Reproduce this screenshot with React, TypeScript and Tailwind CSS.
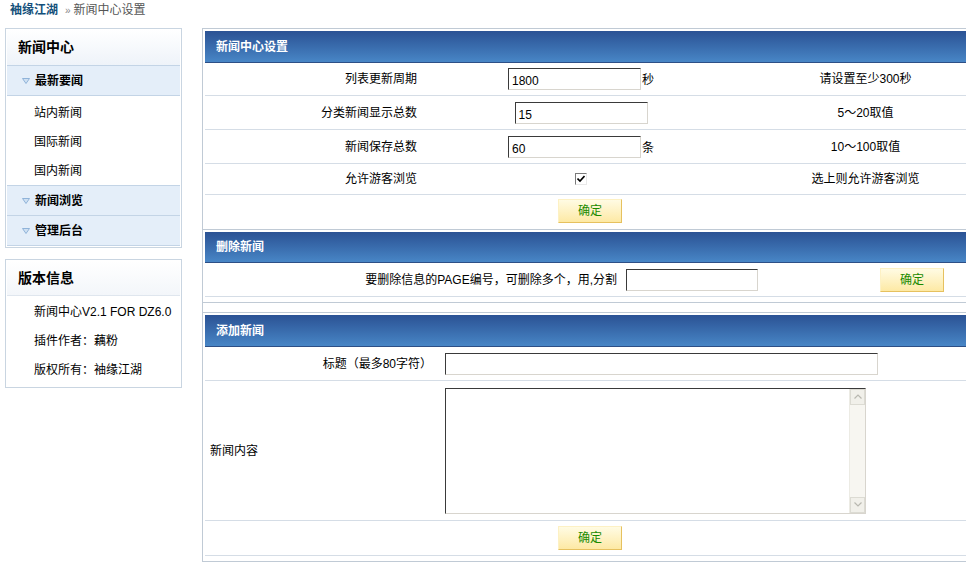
import React from 'react';

const font = { fontFamily: '"Liberation Sans", "Noto Sans CJK SC", sans-serif' };

// small blue triangle used in the side menu
function Tri() {
  return (
    <svg width="8" height="6" viewBox="0 0 8 6" className="mr-[5px]">
      <path d="M0.5 0.5 L7.5 0.5 L4 5.5 Z" fill="#cfe0f2" stroke="#8fb3d9" strokeWidth="1" />
    </svg>
  );
}

function OkButton() {
  return (
    <button className="w-[64px] h-[24px] bg-gradient-to-b from-[#fffbe3] to-[#fde9a4] border border-[#fdf1c4] border-r-[#e6c15f] border-b-[#e6c15f] text-[#1a8a00] text-[12px]">
      确定
    </button>
  );
}

function Input({ w, value }: { w: string; value?: string }) {
  return (
    <div
      className={`${w} h-[22px] bg-white border border-t-[#3a3a3a] border-l-[#3a3a3a] border-r-[#d8d5ce] border-b-[#d8d5ce] text-[12px] text-black pl-[3px] pt-[5px] leading-[14px]`}
    >
      {value}
    </div>
  );
}

function Checkbox() {
  return (
    <div className="w-[12px] h-[12px] border border-t-[#7a7a7a] border-l-[#7a7a7a] border-r-[#e8e8e8] border-b-[#e8e8e8] bg-white flex items-center justify-center">
      <svg width="8" height="8" viewBox="0 0 8 8">
        <path d="M0.5 3.5 L3 6 L7.5 1" fill="none" stroke="#000" strokeWidth="1.6" />
      </svg>
    </div>
  );
}

function Header({ title, h = 'h-[32px]' }: { title: string; h?: string }) {
  return (
    <div className={`${h} bg-gradient-to-b from-[#2b5294] to-[#4886c6] border-b border-[#2d4f86] flex items-center pl-[11px] text-white font-bold text-[12px]`}>
      {title}
    </div>
  );
}

const settings = [
  { label: '列表更新周期', value: '1800', unit: '秒', hint: '请设置至少300秒', h: 'h-[33px]' },
  { label: '分类新闻显示总数', value: '15', unit: '', hint: '5～20取值', h: 'h-[34px]' },
  { label: '新闻保存总数', value: '60', unit: '条', hint: '10～100取值', h: 'h-[34px]' },
];

export default function App() {
  return (
    <div className="w-[966px] h-[564px] overflow-hidden bg-white text-[12px] text-black" style={font}>
      {/* breadcrumb */}
      <div className="h-[20px] flex items-center pl-[10px]">
        <span className="font-bold text-[#134f7a]">袖缘江湖</span>
        <span className="text-[#888] text-[10px] ml-[7px] mr-[3px]">»</span>
        <span className="text-[#555]">新闻中心设置</span>
      </div>

      <div className="flex mt-[8px]">
        {/* sidebar */}
        <div className="w-[177px] ml-[5px] shrink-0">
          <div className="border border-[#c9d5e1] p-[1px]">
            <div className="h-[35px] bg-gradient-to-b from-white to-[#eef3f9] flex items-center pl-[11px] font-bold text-[14px]">
              新闻中心
            </div>
            <div className="h-[31px] bg-[#e4eef9] border-t border-b border-[#c3d4e6] flex items-center pl-[15px] font-bold text-[12px]">
              <Tri />
              最新要闻
            </div>
            <div className="pl-[27px] pt-[2px]">
              <div className="h-[29px] flex items-center">站内新闻</div>
              <div className="h-[29px] flex items-center">国际新闻</div>
              <div className="h-[29px] flex items-center">国内新闻</div>
            </div>
            <div className="h-[31px] bg-[#e4eef9] border-t border-b border-[#c3d4e6] flex items-center pl-[15px] font-bold">
              <Tri />
              新闻浏览
            </div>
            <div className="h-[30px] bg-[#e4eef9] border-b border-[#c3d4e6] flex items-center pl-[15px] font-bold">
              <Tri />
              管理后台
            </div>
          </div>

          <div className="border border-[#c9d5e1] p-[1px] mt-[11px]">
            <div className="h-[35px] bg-gradient-to-b from-white to-[#f3f6fa] border-b border-[#dfe6ee] flex items-center pl-[11px] font-bold text-[14px]">
              版本信息
            </div>
            <div className="pl-[27px] pt-[1px] pb-[2px]">
              <div className="h-[29px] flex items-center">新闻中心V2.1 FOR DZ6.0</div>
              <div className="h-[29px] flex items-center">插件作者：藕粉</div>
              <div className="h-[29px] flex items-center">版权所有：袖缘江湖</div>
            </div>
          </div>
        </div>

        {/* main */}
        <div className="w-[800px] ml-[20px] shrink-0 border-l border-[#c0cad5]">
          {/* settings */}
          <div className="border border-l-0 border-[#c0cad5] p-[2px]">
            <Header title="新闻中心设置" />
            {settings.map((s) => (
              <div key={s.label} className={`${s.h} flex items-center border-b border-[#d5dde6]`}>
                <div className="w-[225px] text-right pr-[13px]">{s.label}</div>
                <div className="w-[302px] flex justify-center items-end">
                  <Input w="w-[133px]" value={s.value} />
                  {s.unit && <span className="ml-[1px] mb-[1px]">{s.unit}</span>}
                </div>
                <div className="flex-1 text-center">{s.hint}</div>
              </div>
            ))}
            <div className="h-[31px] flex items-center border-b border-[#d5dde6]">
              <div className="w-[225px] text-right pr-[13px]">允许游客浏览</div>
              <div className="w-[302px] flex justify-center">
                <Checkbox />
              </div>
              <div className="flex-1 text-center">选上则允许游客浏览</div>
            </div>
            <div className="h-[32px] flex items-center">
              <div className="ml-[353px]">
                <OkButton />
              </div>
            </div>
          </div>

          {/* delete */}
          <div className="border border-l-0 border-t-0 border-[#c0cad5] p-[2px] pb-[5px]">
            <Header title="删除新闻" h="h-[31px]" />
            <div className="h-[34px] flex items-center border-b border-[#d5dde6]">
              <div className="w-[412px] text-right">要删除信息的PAGE编号，可删除多个，用,分割</div>
              <div className="ml-[9px]">
                <Input w="w-[132px]" />
              </div>
              <div className="ml-[122px]">
                <OkButton />
              </div>
            </div>
          </div>

          {/* add */}
          <div className="border border-l-0 border-[#c0cad5] p-[2px] pb-[5px] mt-[9px]">
            <Header title="添加新闻" />
            <div className="h-[34px] flex items-center border-b border-[#d5dde6]">
              <div className="w-[227px] text-right">标题（最多80字符）</div>
              <div className="ml-[13px]">
                <Input w="w-[433px]" />
              </div>
            </div>
            <div className="h-[140px] flex items-center border-b border-[#d5dde6]">
              <div className="w-[240px] pl-[5px]">新闻内容</div>
              <div className="w-[421px] h-[126px] bg-white border border-t-[#3a3a3a] border-l-[#3a3a3a] border-r-[#d8d5ce] border-b-[#d8d5ce] flex justify-end">
                <div className="w-[16px] h-full bg-[#f7f6f1] border-l border-[#ecebe4] flex flex-col justify-between">
                  <div className="h-[16px] bg-[#f1f0ea] border border-[#dcdbd3] flex items-center justify-center">
                    <svg width="8" height="5" viewBox="0 0 8 5">
                      <path d="M0.5 4.5 L4 1 L7.5 4.5" fill="none" stroke="#b9b8b0" strokeWidth="1.2" />
                    </svg>
                  </div>
                  <div className="h-[16px] bg-[#f1f0ea] border border-[#dcdbd3] flex items-center justify-center">
                    <svg width="8" height="5" viewBox="0 0 8 5">
                      <path d="M0.5 0.5 L4 4 L7.5 0.5" fill="none" stroke="#b9b8b0" strokeWidth="1.2" />
                    </svg>
                  </div>
                </div>
              </div>
            </div>
            <div className="h-[35px] flex items-center border-b border-[#d5dde6]">
              <div className="ml-[353px]">
                <OkButton />
              </div>
            </div>
          </div>
        </div>
      </div>
    </div>
  );
}
